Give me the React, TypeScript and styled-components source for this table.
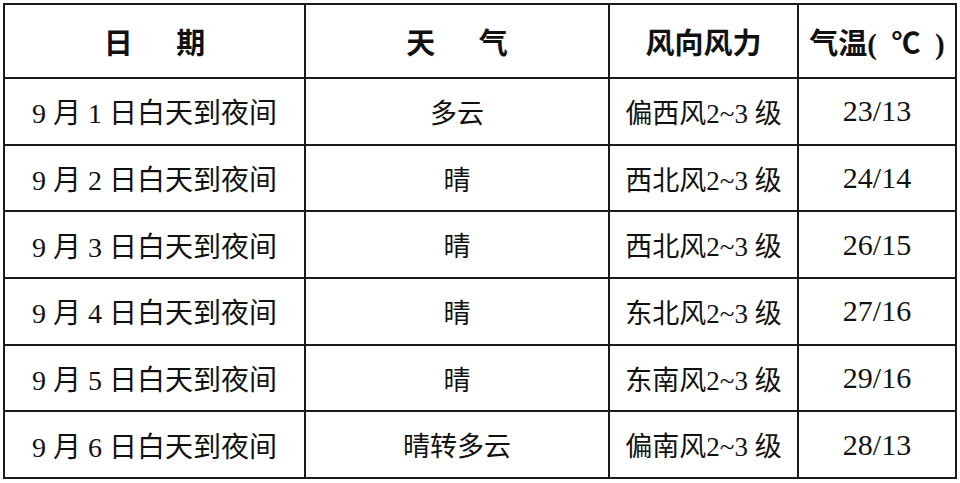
import styled, { createGlobalStyle } from 'styled-components'

const GlobalStyle = createGlobalStyle`
  html, body {
    margin: 0;
    padding: 0;
    background: #ffffff;
  }
  body {
    font-family: "Liberation Serif", "Noto Sans CJK SC", serif;
    color: #111111;
  }
`

type Row = {
  date: string
  weather: string
  wind: string
  temp: string
}

const rows: Row[] = [
  { date: '9 月 1 日白天到夜间', weather: '多云', wind: '偏西风2~3 级', temp: '23/13' },
  { date: '9 月 2 日白天到夜间', weather: '晴', wind: '西北风2~3 级', temp: '24/14' },
  { date: '9 月 3 日白天到夜间', weather: '晴', wind: '西北风2~3 级', temp: '26/15' },
  { date: '9 月 4 日白天到夜间', weather: '晴', wind: '东北风2~3 级', temp: '27/16' },
  { date: '9 月 5 日白天到夜间', weather: '晴', wind: '东南风2~3 级', temp: '29/16' },
  { date: '9 月 6 日白天到夜间', weather: '晴转多云', wind: '偏南风2~3 级', temp: '28/13' },
]

const App = () => {
  return (
    <>
      <GlobalStyle />
      <Page>
        <Table>
          <colgroup>
            <col style={{ width: 301 }} />
            <col style={{ width: 304 }} />
            <col style={{ width: 189 }} />
            <col style={{ width: 158 }} />
          </colgroup>
          <thead>
            <tr>
              <HeadCell>日&emsp;&ensp;期</HeadCell>
              <HeadCell>天&emsp;&ensp;气</HeadCell>
              <HeadCell>风向风力</HeadCell>
              <HeadCell>气温(&ensp;℃&ensp;)</HeadCell>
            </tr>
          </thead>
          <tbody>
            {rows.map((r) => (
              <tr key={r.date}>
                <Cell $size={28}>{r.date}</Cell>
                <Cell $size={27}>{r.weather}</Cell>
                <Cell $size={27}>{r.wind}</Cell>
                <Cell $size={30}>{r.temp}</Cell>
              </tr>
            ))}
          </tbody>
        </Table>
      </Page>
    </>
  )
}

export default App

const Page = styled.div`
  padding: 3px 0 0 3px;
`

const Table = styled.table`
  border-collapse: collapse;
  table-layout: fixed;
  width: 952px;
  border: 2px solid #1a1a1a;

  thead tr {
    height: 74px;
  }

  tbody tr {
    height: 66.7px;
  }
`

const HeadCell = styled.th`
  border: 2px solid #1a1a1a;
  padding: 0;
  font-size: 29px;
  font-weight: 700;
  text-align: center;
  vertical-align: middle;
  white-space: nowrap;
`

const Cell = styled.td<{ $size: number }>`
  border: 2px solid #1a1a1a;
  padding: 0;
  font-size: ${(p) => p.$size}px;
  font-weight: 400;
  text-align: center;
  vertical-align: middle;
  white-space: nowrap;
`
